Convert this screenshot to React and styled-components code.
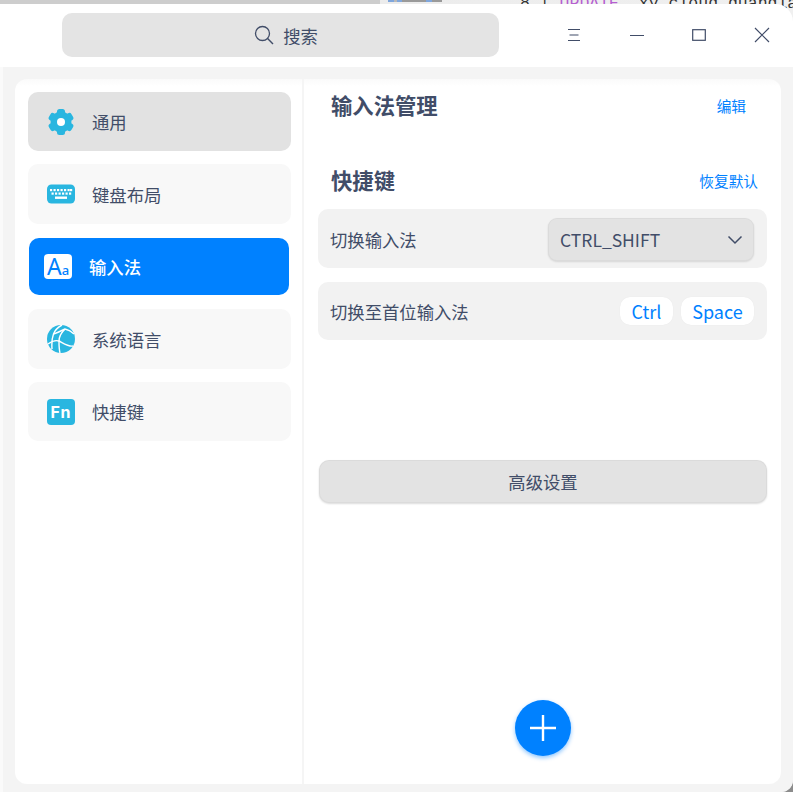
import React from "react";
import styled, { createGlobalStyle } from "styled-components";

const Global = createGlobalStyle`
  html, body { margin: 0; padding: 0; height: 792px; overflow: hidden; background: #ececec; }
  * { box-sizing: border-box; }
  body { font-family: "Noto Sans CJK SC", "Noto Sans", sans-serif; color: #414d68; }
`;
const Page = styled.div`
  position: relative; width: 793px; height: 792px; overflow: hidden; padding-top: 4px;
  background: linear-gradient(90deg, #cdcdcd 0, #cdcdcd 380px, #ececec 380px, #f0f0f0 100%);
`;
const Backdrop = styled.div`
  position: absolute; top: -6px; left: 520px; white-space: pre;
  font: 16.5px/20px "Liberation Mono", monospace; color: #333;
  span { color: #b55fd0; }
`;
const BackTab = styled.div`
  position: absolute; top: 0; left: 388px; width: 54px; height: 2px;
  background: linear-gradient(90deg, #7fa6dc 0 6px, #b8b8b8 6px 9px, #7fa6dc 9px 14px, #9a9a9a 14px 38px, #7fa6dc 38px 44px, #9a9a9a 44px 54px);
`;
const Window = styled.div`
  position: relative; width: 793px; height: 788px; background: #f4f4f4;
  border-radius: 0 18px 12px 0; overflow: hidden;
  display: flex; flex-direction: column;
`;
const TitleBar = styled.header`
  height: 63px; flex: none; background: #fff; display: flex; align-items: flex-start;
  padding: 9px 0 0 62px;
`;
const Search = styled.div`
  flex: none; width: 437px; height: 44px; background: #e4e4e4; border-radius: 10px;
  display: flex; align-items: center; justify-content: center; gap: 8px; font-size: 17.33px;
  padding-left: 10px;
`;
const WinButtons = styled.div`display: flex; flex: none; margin-left: 44px;`;
const WinButton = styled.div`
  width: 62.5px; height: 44px; display: flex; align-items: center; justify-content: center;
`;
const Body = styled.div`
  flex: 1; padding: 12px 12px 8px 15px; min-height: 0;
  background: linear-gradient(90deg, #fafafa 0 3px, #f4f4f4 3px);
`;
const Panel = styled.main`
  height: 100%; background: linear-gradient(180deg, #fafafa 0, #fff 7px); border-radius: 12px; display: flex; position: relative;
`;
const Sidebar = styled.nav`
  width: 289px; flex: none; padding: 13px 0 0 13px; display: flex; flex-direction: column;
  border-right: 2px solid #f5f5f5;
`;
const NavItem = styled.div`
  width: 263px; height: ${p => p.$h || 60}px; margin-bottom: ${p => p.$mb ?? 13}px;
  border-radius: 10px; background: ${p => p.$current ? "#e2e2e2" : "#f8f8f8"};
  display: flex; align-items: center; padding-left: 19px; gap: 17px; font-size: 17.33px;
`;
const NavActive = styled.div`
  width: 260px; height: 57px; margin: 1px 0 14px 1px; border-radius: 10px; background: #0081ff;
  display: flex; align-items: center; padding-left: 15px; gap: 17px; font-size: 17.33px; font-weight: 500; color: #fff;
`;
const AaTile = styled.div`
  width: 28px; height: 25px; background: #fff; border-radius: 4px; color: #0081ff;
  display: flex; align-items: baseline; justify-content: center;
  font-family: "Noto Sans", sans-serif; line-height: 24px;
  b { font-weight: 400; font-size: 23px; } i { font-style: normal; font-size: 13px; }
`;
const FnTile = styled.div`
  width: 28px; height: 26px; background: #29b6e0; border-radius: 4px; color: #fff;
  font: 700 16px/26px "Inter", sans-serif; text-align: center; letter-spacing: 1px;
`;
const Content = styled.section`flex: 1; padding: 0 14px 0 14px; position: relative;`;
const HeadRow = styled.div`
  display: flex; justify-content: space-between; align-items: center; padding: ${p => p.$pad};
  height: 30px; margin-top: ${p => p.$mt}px;
`;
const Title = styled.h2`margin: -2px 0 0; font-size: 21.33px; line-height: 30px; font-weight: 700; color: #414d68;`;
const Link = styled.a`color: #0081ff; font-size: 14.67px; line-height: 20px;`;
const Row = styled.div`
  height: ${p => p.$h}px; width: 449px; margin-top: ${p => p.$mt}px; background: #f2f2f2; border-radius: 10px;
  display: flex; align-items: center; justify-content: space-between; padding: ${p => p.$pt || 0}px 13px 0 12px; font-size: 17.33px;
`;
const Select = styled.div`
  width: 206px; height: 43px; background: #e3e3e3; border-radius: 9px;
  box-shadow: 0 1px 2px rgba(0,0,0,.12), inset 0 0 0 1px rgba(0,0,0,.03);
  display: flex; align-items: center; justify-content: space-between; padding: 0 11px 0 12px;
  font-size: 17.5px;
`;
const Keys = styled.div`display: flex; gap: 8px;`;
const Key = styled.div`
  height: 28px; width: ${p => p.$w}px; background: #fff; border-radius: 10px; color: #0081ff;
  font-size: 18px; line-height: 28px; text-align: center; box-shadow: 0 0 1px rgba(0,0,0,.08);
`;
const Wide = styled.button`
  display: block; width: 448px; height: 43px; margin: 120px 0 0 1px; border: none; border-radius: 10px;
  background: #e3e3e3; box-shadow: 0 1px 2px rgba(0,0,0,.14), inset 0 0 0 1px rgba(0,0,0,.03);
  font: 17.33px "Noto Sans CJK SC", sans-serif; color: #414d68; padding: 0;
`;
const Fab = styled.div`
  position: absolute; left: 211px; top: 621px; width: 56px; height: 56px; border-radius: 50%;
  background: #0081ff; box-shadow: 0 2px 4px rgba(0,129,255,.45);
  display: flex; align-items: center; justify-content: center;
`;
const CornerBackdrop = styled.div`
  position: absolute; right: 0; bottom: 0; width: 12px; height: 12px; background: #8c8c8c;
`;

const C = "#29b6e0", I = "#414d68";
const Gear = () => (
  <svg width="28" height="28" viewBox="0 0 28 28">
    <g fill={C}>
      <circle cx="14" cy="14" r="10.5"/>
      {[0,60,120,180,240,300].map(a => (
        <rect key={a} x="10" y="1" width="8" height="6" rx="2.5" transform={`rotate(${a} 14 14)`}/>
      ))}
    </g>
    <circle cx="14" cy="14" r="4" fill="#fff"/>
  </svg>
);
const KeyboardIcon = () => (
  <svg width="28" height="20" viewBox="0 0 28 20">
    <rect width="28" height="19" y=".5" rx="4.5" fill={C}/>
    <g fill="#fff">
      {[3,6.5,10,13.5,17,20.5,23].map(x => <rect key={x} x={x} y="5" width="2.2" height="2.2"/>)}
      {[4.5,8,11.5,15,18.5,22].map(x => <rect key={x} x={x} y="8.5" width="2.2" height="2.2"/>)}
      <rect x="8" y="12.5" width="12" height="2.4"/>
    </g>
  </svg>
);
const GlobeIcon = () => (
  <svg width="28" height="28" viewBox="0 0 28 28">
    <circle cx="14" cy="14" r="14" fill={C}/>
    <g stroke="#fff" strokeWidth="1.4" fill="none">
      <path d="M15 0 C11 2 8 5 6.5 9 C5 13 4.5 17 5 24"/>
      <path d="M6.5 9 C10 8 14 6 18 4"/>
      <path d="M1 19 C5 16 9 15 12 16 C16 18 22 22 26 21"/>
      <path d="M18 4 C14 8 12 12 12 16"/>
      <path d="M18 4 C22 5 25 7 27 9"/>
      <path d="M12 16 C12 20 12 24 13 28"/>
    </g>
    <circle cx="20" cy="12" r="5.5" fill={C}/>
  </svg>
);
const line = { stroke: I, strokeWidth: 1.2, fill: "none" };

export default function App() {
  return (
    <>
      <Global />
      <Page>
        <BackTab />
        <Backdrop>8 | <span>UPDATE</span> `xy_cloud_guangla</Backdrop>
        <CornerBackdrop />
        <Window>
          <TitleBar>
            <Search>
              <svg width="22" height="22" viewBox="0 0 22 22">
                <circle cx="9.5" cy="9.5" r="7" stroke={I} strokeWidth="1.3" fill="none"/>
                <path d="M14.6 14.6 L20 20" stroke={I} strokeWidth="1.4"/>
              </svg>
              搜索
            </Search>
            <WinButtons>
              <WinButton><svg width="14" height="14" viewBox="0 0 14 14"><path d="M1 1.5H13M2.5 7H11.5M1 12.5H13" {...line}/></svg></WinButton>
              <WinButton><svg width="14" height="14" viewBox="0 0 14 14"><path d="M0 7.5H14" {...line}/></svg></WinButton>
              <WinButton><svg width="14" height="14" viewBox="0 0 14 14"><rect x=".7" y="1.7" width="12.6" height="10.6" {...line}/></svg></WinButton>
              <WinButton><svg width="16" height="16" viewBox="0 0 16 16"><path d="M1 1L15 15M15 1L1 15" {...line}/></svg></WinButton>
            </WinButtons>
          </TitleBar>
          <Body>
            <Panel>
              <Sidebar>
                <NavItem $current $h={59}><Gear />通用</NavItem>
                <NavItem><KeyboardIcon />键盘布局</NavItem>
                <NavActive>
                  <AaTile><b>A</b><i>a</i></AaTile>
                  输入法
                </NavActive>
                <NavItem><GlobeIcon />系统语言</NavItem>
                <NavItem $h={59} $mb={0}><FnTile>Fn</FnTile>快捷键</NavItem>
              </Sidebar>
              <Content>
                <HeadRow $mt={12} $pad="0 21px 0 13px">
                  <Title>输入法管理</Title><Link>编辑</Link>
                </HeadRow>
                <HeadRow $mt={45} $pad="0 9px 0 13px">
                  <Title>快捷键</Title><Link>恢复默认</Link>
                </HeadRow>
                <Row $h={59} $mt={13} $pt={2}>
                  切换输入法
                  <Select>
                    CTRL_SHIFT
                    <svg width="16" height="10" viewBox="0 0 16 10"><path d="M1.5 1.5L8 8L14.5 1.5" stroke={I} strokeWidth="1.5" fill="none"/></svg>
                  </Select>
                </Row>
                <Row $h={58} $mt={14}>
                  切换至首位输入法
                  <Keys><Key $w={53}>Ctrl</Key><Key $w={73}>Space</Key></Keys>
                </Row>
                <Wide>高级设置</Wide>
                <Fab>
                  <svg width="26" height="26" viewBox="0 0 26 26"><path d="M13 0V26M0 13H26" stroke="#fff" strokeWidth="2.4"/></svg>
                </Fab>
              </Content>
            </Panel>
          </Body>
        </Window>
      </Page>
    </>
  );
}
